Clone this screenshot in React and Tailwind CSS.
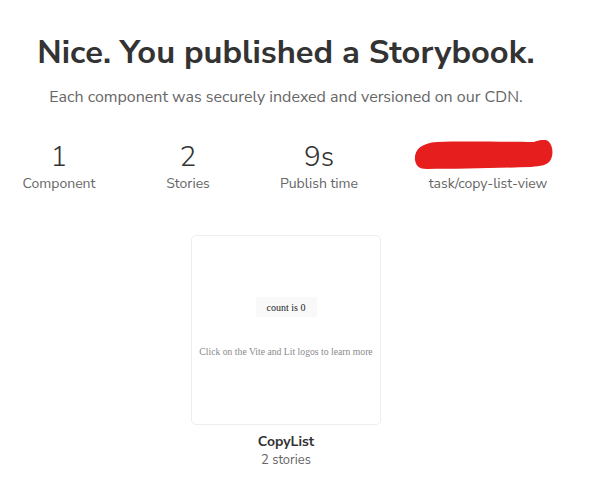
export default function App() {
  return (
    <div className="w-[592px] h-[497px] bg-white overflow-hidden" style={{ fontFamily: '"Nunito Sans", Lato, "Open Sans", sans-serif' }}>
      <div className="w-[572px] flex flex-col items-center">
        <h1 className="mt-[33px] text-[32.7px] leading-[40px] font-bold text-[#333] whitespace-nowrap">Nice. You published a Storybook.</h1>
        <p className="mt-[13px] text-[16px] leading-[22px] text-[#666] whitespace-nowrap">Each component was securely indexed and versioned on our CDN.</p>
      </div>
      <div className="mt-[32px] flex ml-[9px]">
        <div className="w-[100px] flex flex-col items-center">
          <div className="text-[28px] leading-[34px] font-light text-[#333]">1</div>
          <div className="text-[14px] leading-[20px] text-[#666]">Component</div>
        </div>
        <div className="w-[100px] ml-[29px] flex flex-col items-center">
          <div className="text-[28px] leading-[34px] font-light text-[#333]">2</div>
          <div className="text-[14px] leading-[20px] text-[#666]">Stories</div>
        </div>
        <div className="w-[100px] ml-[31px] flex flex-col items-center">
          <div className="text-[28px] leading-[34px] font-light text-[#333]">9s</div>
          <div className="text-[14px] leading-[20px] text-[#666]">Publish time</div>
        </div>
        <div className="w-[140px] ml-[44px] flex flex-col items-center">
          <div className="h-[34px] w-[140px] flex items-start">
            <svg width="140" height="30" viewBox="0 0 140 30">
              <path d="M2 20 C1 10 8 3 24 2 C50 1 95 2 121 2 C126 0 132 -1 135 1 C140 5 141 15 137 21 C134 25 128 26 118 27 C85 28 45 29 14 29 C6 29 3 26 2 20 Z" fill="#e61e1e" />
            </svg>
          </div>
          <div className="pl-[10px] text-[14px] leading-[20px] text-[#666] whitespace-nowrap">task/copy-list-view</div>
        </div>
      </div>
      <div className="w-[572px] flex flex-col items-center mt-[41px]">
        <div className="w-[190px] h-[190px] rounded-[5px] border border-[#eee] flex flex-col items-center" style={{ fontFamily: '"Liberation Serif", serif' }}>
          <div className="mt-[61px] w-[61px] h-[20px] bg-[#f9f9f9] flex items-center justify-center text-[10px] text-[#222]">count is 0</div>
          <div className="mt-[28px] text-[9.7px] text-[#8a8a8a] whitespace-nowrap">Click on the Vite and Lit logos to learn more</div>
        </div>
        <div className="mt-[8px] text-[14px] leading-[18px] font-bold text-[#333]">CopyList</div>
        <div className="text-[13px] leading-[18px] text-[#666]">2 stories</div>
      </div>
    </div>
  );
}
